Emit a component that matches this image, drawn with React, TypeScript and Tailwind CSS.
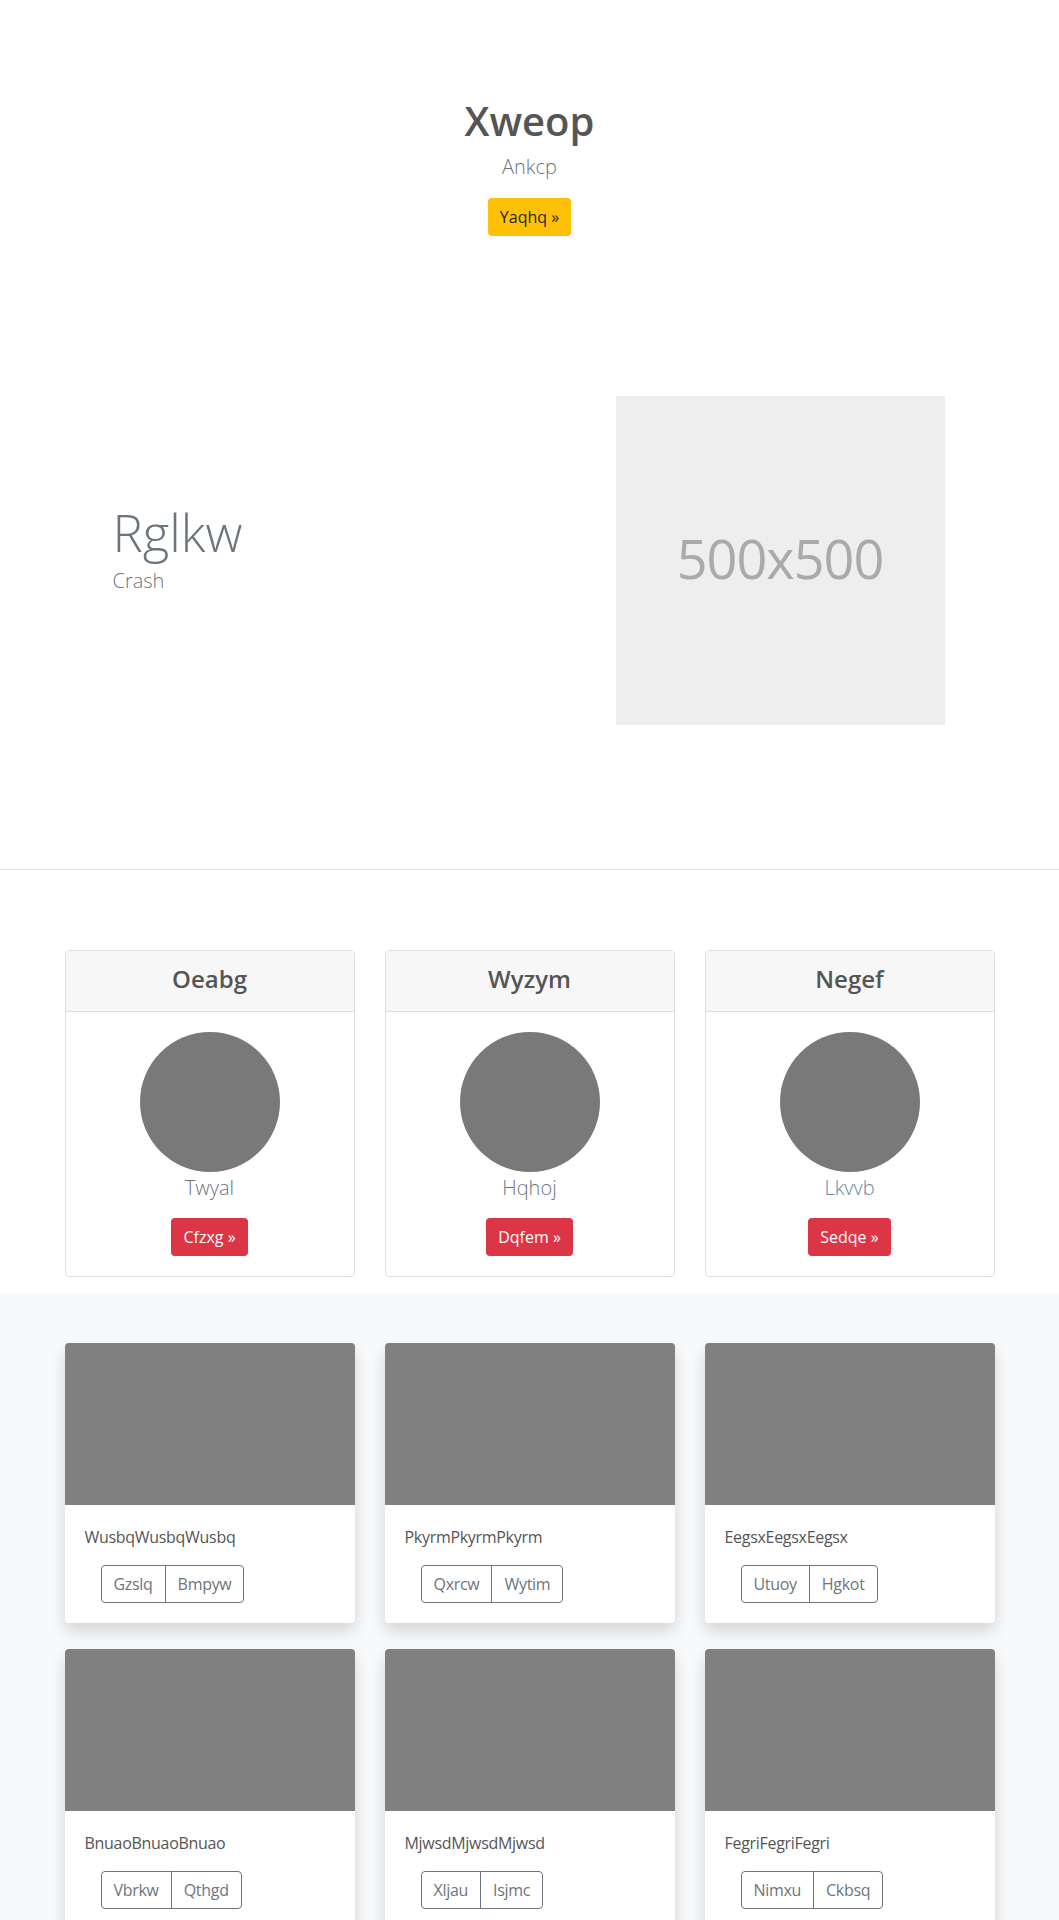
import React from "react";

const font = { fontFamily: '"Open Sans", "Noto Sans", Arial, sans-serif' };

const tiers = [
  { title: "Oeabg", name: "Twyal", cta: "Cfzxg", nameColor: "text-[#6c757d]" },
  { title: "Wyzym", name: "Hqhoj", cta: "Dqfem", nameColor: "text-[#6c757d]" },
  { title: "Negef", name: "Lkvvb", cta: "Sedqe", nameColor: "text-[#6a87a6]" },
];

const albums = [
  { text: "WusbqWusbqWusbq", a: "Gzslq", b: "Bmpyw" },
  { text: "PkyrmPkyrmPkyrm", a: "Qxrcw", b: "Wytim" },
  { text: "EegsxEegsxEegsx", a: "Utuoy", b: "Hgkot" },
  { text: "BnuaoBnuaoBnuao", a: "Vbrkw", b: "Qthgd" },
  { text: "MjwsdMjwsdMjwsd", a: "Xljau", b: "Isjmc" },
  { text: "FegriFegriFegri", a: "Nimxu", b: "Ckbsq" },
];

function TierCard({ title, name, cta, nameColor }: (typeof tiers)[number]) {
  return (
    <div className="flex flex-col rounded-[4px] border border-[#dfdfdf] bg-white">
      <div className="flex h-[61px] items-center justify-center border-b border-[#dfdfdf] bg-[#f7f7f7] pb-[6px]">
        <h4 className="text-[24px] font-semibold leading-[29px] text-[#555]">{title}</h4>
      </div>
      <div className="flex flex-col items-center p-5">
        <div className="h-[140px] w-[140px] rounded-full bg-[#797979]" />
        <p className={`mt-[1px] text-[20px] font-light leading-[30px] ${nameColor}`}>{name}</p>
        <button className="mt-[15px] h-[38px] rounded-[4px] bg-[#dc3545] px-3 text-[16px] leading-6 text-white">
          {cta} »
        </button>
      </div>
    </div>
  );
}

function AlbumCard({ text, a, b }: (typeof albums)[number]) {
  return (
    <div className="overflow-hidden rounded-[4px] bg-white shadow-[0_8px_16px_rgba(0,0,0,0.15)]">
      <div className="h-[162px] bg-[#808080]" />
      <div className="p-5">
        <p className="text-[16px] leading-6 tracking-[-0.3px] text-[#555]">{text}</p>
        <div className="ml-4 mt-4 flex">
          <button className="h-[38px] rounded-l-[4px] border border-[#6c757d] px-3 text-[16px] leading-6 tracking-[-0.3px] text-[#6c757d]">
            {a}
          </button>
          <button className="-ml-px h-[38px] rounded-r-[4px] border border-[#6c757d] px-3 text-[16px] leading-6 tracking-[-0.3px] text-[#6c757d]">
            {b}
          </button>
        </div>
      </div>
    </div>
  );
}

export default function App() {
  return (
    <div className="min-h-[1920px] w-full bg-white" style={font}>
      {/* hero */}
      <section className="flex flex-col items-center pt-[97px] text-center">
        <h1 className="text-[40px] font-semibold leading-[48px] text-[#555]">Xweop</h1>
        <p className="mt-[7px] text-[20px] font-light leading-[30px] text-[#6c757d]">Ankcp</p>
        <button className="mt-4 h-[38px] rounded-[4px] bg-[#ffc107] px-3 text-[16px] leading-6 text-[#212529]">
          Yaqhq »
        </button>
      </section>

      {/* feature */}
      <section className="mx-auto flex h-[633px] w-[930px] items-start">
        <div className="mt-[266px] flex w-[480px] flex-col pl-[48px]">
          <h2 className="text-[51px] font-light leading-[61px] text-[#6c757d]">Rglkw</h2>
          <p className="mt-[3px] text-[20px] font-light leading-[30px] text-[#6c757d]">Crash</p>
        </div>
        <div className="ml-[71px] mt-[160px] flex h-[329px] w-[329px] items-center justify-center bg-[#eeeeee]">
          <span className="-mt-[4px] text-[54px] tracking-[-1px] text-[#aaaaaa]">500x500</span>
        </div>
      </section>

      <hr className="border-t border-[#e5e5e5]" />

      {/* tiers */}
      <section className="mx-auto grid w-[930px] grid-cols-3 gap-[30px] pb-[16px] pt-[80px]">
        {tiers.map((t) => (
          <TierCard key={t.title} {...t} />
        ))}
      </section>

      {/* albums */}
      <section className="bg-[#f8f9fa] pb-12 pt-[50px]">
        <div className="mx-auto grid w-[930px] grid-cols-3 gap-x-[30px] gap-y-[26px]">
          {albums.map((al) => (
            <AlbumCard key={al.text} {...al} />
          ))}
        </div>
      </section>
    </div>
  );
}
